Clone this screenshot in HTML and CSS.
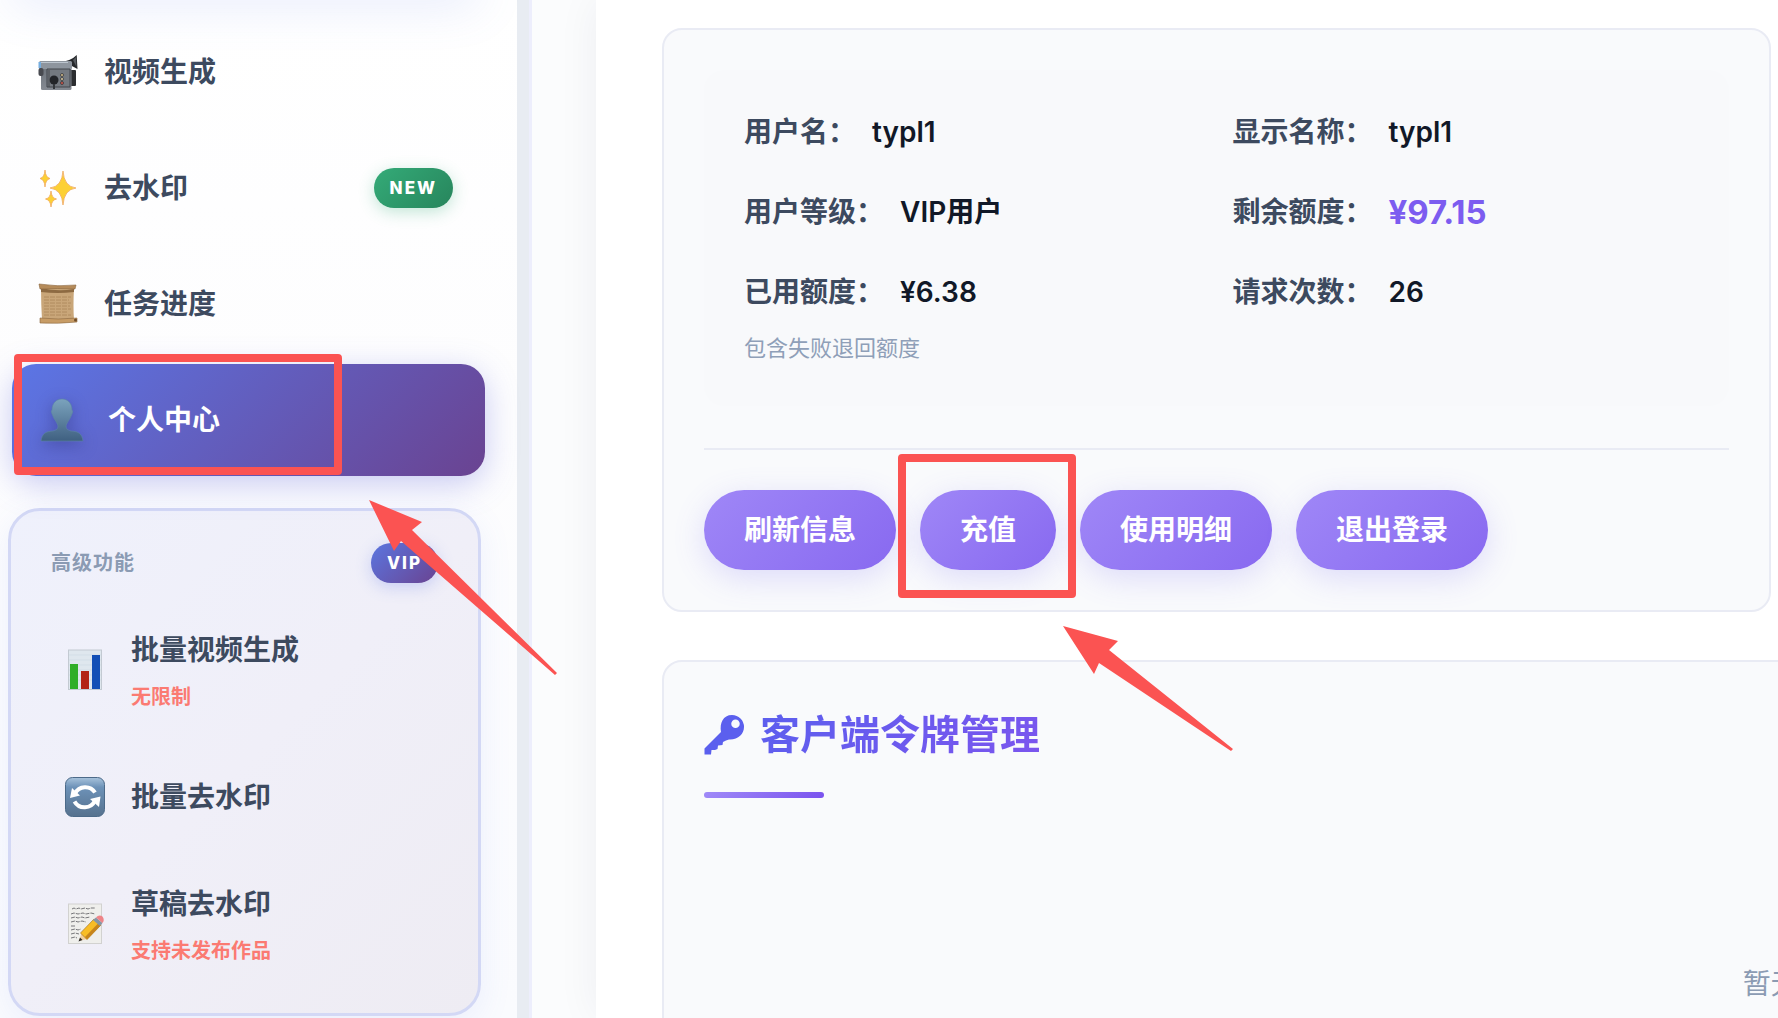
FILE: index.html
```html
<!DOCTYPE html>
<html lang="zh-CN">
<head>
	<meta charset="UTF-8">
	<title>个人中心</title>
	<link rel="stylesheet" href="styles.css">
</head>
<body>
	<div class="layout">
		<aside class="sidebar">
			<nav class="nav">
				<a href="#" class="nav-item">
					<svg class="nav-icon" viewBox="0 0 40 40">
						<defs>
							<linearGradient id="cam" x1="0" y1="0" x2="0" y2="1">
								<stop offset="0" stop-color="#a3a9b1"/>
								<stop offset="0.3" stop-color="#70767e"/>
								<stop offset="1" stop-color="#858a92"/>
							</linearGradient>
						</defs>
						<path d="M22 10 Q33 9 38.700 3 L39.500 17 L32 13Z" fill="#25272a"/>
						<path d="M35 8 L38 5 L38.500 15Z" fill="#55595e"/>
						<rect x="32" y="18" width="6" height="16" rx="1" fill="#2b2d30"/>
						<rect x="3" y="9.500" width="30.500" height="28.500" rx="1.500" fill="url(#cam)"/>
						<rect x="1" y="9" width="33" height="8" rx="1.500" fill="#8e959e"/>
						<path d="M1 10.500H30" stroke="#bcc5ce"/>
						<rect x="0.500" y="10" width="2.500" height="6" fill="#76aee0"/>
						<rect x="0.500" y="16" width="5" height="8" rx="2" fill="#484a50"/>
						<path d="M9 17H32V35H9Z" fill="#747980" stroke="#42464c"/>
						<circle cx="16" cy="28" r="4.500" fill="#232529"/>
						<path d="M16 32V37" stroke="#34373b" stroke-width="2"/>
						<path d="M11 18V35" stroke="#484c51"/>
						<circle cx="24" cy="23" r="1.500" fill="#d8c08c" stroke="#33363a" stroke-width="0.800"/>
						<circle cx="24" cy="27" r="1.500" fill="#e0cfa4" stroke="#33363a" stroke-width="0.800"/>
						<circle cx="24" cy="31" r="1.500" fill="#d4574a" stroke="#33363a" stroke-width="0.800"/>
					</svg>
					<span class="nav-text">视频生成</span>
				</a>
				<a href="#" class="nav-item">
					<svg class="nav-icon" viewBox="0 0 40 40">
						<g fill="#fcd034" stroke="#f0a860" stroke-width="0.800">
							<path d="M25 3 Q26 18.500 38 20 Q26 21.500 25 37 Q24 21.500 12 20 Q24 18.500 25 3Z"/>
							<path d="M7 2 Q7.500 9.500 12 10.500 Q7.500 11.500 7 19 Q6.500 11.500 2 10.500 Q6.500 9.500 7 2Z"/>
							<path d="M13 23 Q13.500 30 18.500 31 Q13.500 32 13 39 Q12.500 32 7.500 31 Q12.500 30 13 23Z"/>
						</g>
					</svg>
					<span class="nav-text">去水印</span>
					<span class="badge badge-new">NEW</span>
				</a>
				<a href="#" class="nav-item">
					<svg class="nav-icon" viewBox="0 0 40 40">
						<path d="M3 4H36Q35 22 36 36H4Q3 20 3 4Z" fill="#c9a679"/>
						<path d="M3 4Q20 8 36 5V8Q20 10 3 8Z" fill="#8d6a42"/>
						<path d="M6 13H33M6 16H31M6 19H33M6 22H32M6 25H33M6 28H30M6 31H33" stroke="#ab8759" stroke-width="0.800" stroke-dasharray="5 1"/>
						<path d="M1 0Q20 3 38 1L37 5Q20 4 2 5Z" fill="#b58b5a" stroke="#8a653c" stroke-width="0.600"/>
						<path d="M2 34Q20 36 39 34V38Q20 40 2 39Z" fill="#c79c66" stroke="#8a653c" stroke-width="0.600"/>
						<circle cx="37.500" cy="36" r="1.500" fill="#6f4c28"/>
					</svg>
					<span class="nav-text">任务进度</span>
				</a>
				<a href="#" class="nav-item active">
					<svg class="nav-icon" viewBox="0 0 40 40">
						<defs>
							<linearGradient id="man" x1="0" y1="0" x2="0" y2="1">
								<stop offset="0" stop-color="#7ba3bd"/>
								<stop offset="1" stop-color="#3f6081"/>
							</linearGradient>
						</defs>
						<path d="M20 -1C26.500 -1 30 4 30 10Q31.500 11 30 14C28 20 24 23 24 27Q24 30 29 31C37 31.500 40 34 41 41H-1C0 34 3 31.500 11 31Q16 30 16 27C16 23 12 20 10 14Q8.500 11 10 10C10 4 13.500 -1 20 -1Z" fill="url(#man)" stroke="#5d87a3" stroke-width="0.600"/>
					</svg>
					<span class="nav-text">个人中心</span>
				</a>
			</nav>
			<section class="vip-box">
				<div class="vip-head">
					<span class="vip-title">高级功能</span>
					<span class="badge badge-vip">VIP</span>
				</div>
				<nav class="nav">
					<a href="#" class="nav-item">
						<svg class="nav-icon" viewBox="0 0 40 40">
							<rect x="3.500" y="0" width="33" height="39.500" fill="#dfe7ee" stroke="#c3cad2"/>
							<path d="M4 5H36M4 10H36M4 15H36M4 20H36M4 25H36M4 30H36" stroke="#cfd9e2" stroke-width="0.600"/>
							<rect x="5" y="14" width="8" height="25" fill="#2fae27"/>
							<rect x="16" y="21" width="8" height="18" fill="#b32415"/>
							<rect x="27" y="5" width="8" height="34" fill="#134fb6"/>
						</svg>
						<span class="nav-text">批量视频生成<small class="nav-note">无限制</small></span>
					</a>
					<a href="#" class="nav-item">
						<svg class="nav-icon" viewBox="0 0 40 40">
							<defs>
								<linearGradient id="blue" x1="0" y1="0" x2="0" y2="1">
									<stop offset="0" stop-color="#a8c3dc"/>
									<stop offset="0.250" stop-color="#6d92b8"/>
									<stop offset="1" stop-color="#56718e"/>
								</linearGradient>
							</defs>
							<rect x="0.500" y="0.500" width="39" height="39" rx="7" fill="url(#blue)" stroke="#4c6a89"/>
							<path d="M10 16.500A11.500 11.500 0 0 1 30 15.500" fill="none" stroke="#fff" stroke-width="4"/>
							<path d="M7 11L5 21L15 18.500Z" fill="#fff"/>
							<path d="M30 23.500A11.500 11.500 0 0 1 9.500 24.500" fill="none" stroke="#fff" stroke-width="4"/>
							<path d="M25 22L35.500 19.500L34 30Z" fill="#fff"/>
						</svg>
						<span class="nav-text">批量去水印</span>
					</a>
					<a href="#" class="nav-item">
						<svg class="nav-icon" viewBox="0 0 40 40">
							<rect x="3.500" y="0" width="33" height="39.500" fill="#efefec" stroke="#d2d2d0"/>
							<path d="M7 5l2-1 2 1 3-1 2 1 4-1 3 1 3-1 4 0M6 10l3-1 4 1 5-1 3 1 5-1 4 1M6 14l4-1 3 1 4-1 3 1 5-1M6 18l4-1 3 1 4-1 4 1M6 22h5M6 26l4-1 3 1 3-1M6 30l4-1 4 1M6 34l4-1 2 1" fill="none" stroke="#77777a" stroke-dasharray="4 1"/>
							<path d="M14 37L16.500 29L22 35Z" fill="#f1cf9d"/>
							<path d="M13.500 37.500L15 33.500L17.500 36Z" fill="#2e2b28"/>
							<path d="M15.500 29L29 15L36 21L22 35.500Z" fill="#f8bd25" stroke="#9a6a1c" stroke-width="0.600"/>
							<path d="M20 33L34 18.500L36 21L22 35.500Z" fill="#c7851b"/>
							<path d="M28 16L31 13.500L37.500 19L35 22Z" fill="#8696a5"/>
							<path d="M31 13.500Q34 10 37.500 12.500Q40 16 37.500 19Z" fill="#ee8488"/>
						</svg>
						<span class="nav-text">草稿去水印<small class="nav-note">支持未发布作品</small></span>
					</a>
				</nav>
			</section>
		</aside>

		<main class="main">
			<section class="card">
				<div class="info">
					<div class="info-item"><span class="info-label">用户名：</span><span class="info-value">typl1</span></div>
					<div class="info-item"><span class="info-label">显示名称：</span><span class="info-value">typl1</span></div>
					<div class="info-item"><span class="info-label">用户等级：</span><span class="info-value">VIP用户</span></div>
					<div class="info-item"><span class="info-label">剩余额度：</span><span class="info-value money">¥97.15</span></div>
					<div class="info-item">
						<span class="info-label">已用额度：</span><span class="info-value">¥6.38</span>
						<p class="info-tip">包含失败退回额度</p>
					</div>
					<div class="info-item"><span class="info-label">请求次数：</span><span class="info-value">26</span></div>
				</div>
				<div class="actions">
					<button type="button" class="btn">刷新信息</button>
					<button type="button" class="btn">充值</button>
					<button type="button" class="btn">使用明细</button>
					<button type="button" class="btn">退出登录</button>
				</div>
			</section>

			<section class="card card-token">
				<h2 class="card-title">
					<svg class="key-icon" viewBox="0 0 40 40">
						<path fill-rule="evenodd" d="M28 0A12 12 0 0 1 40 12C40 19 34 25 25 24.500L22 25.500L19 27L18.500 30L14 30.500L13.500 34L11 35L7.500 35L7 39.500H0.500V33.500L17 17C15.500 8 19 0 28 0ZM31.500 4.500A4.200 4.200 0 1 0 31.500 13A4.200 4.200 0 1 0 31.500 4.500Z" fill="#5b5fee"/>
					</svg>
					<span class="card-title-text">客户端令牌管理</span>
				</h2>
				<p class="empty">暂无数据</p>
			</section>
		</main>
	</div>

	<!-- 红色标注 -->
	<svg class="marks" width="1778" height="1018">
		<g fill="none" stroke="#fb5352" stroke-width="8" stroke-linejoin="round">
			<rect x="18" y="358" width="320" height="113"/>
			<rect x="902" y="458" width="170" height="136"/>
		</g>
		<g fill="#fb5352">
			<path d="M369 500L422 522L412 530L557 673L555 675L401 541L394 551Z"/>
			<path d="M1063 626L1118 641L1109 650L1233 749L1231 751L1099 663L1094 674Z"/>
		</g>
	</svg>
</body>
</html>
```
FILE: styles.css
```css
* {
	margin: 0;
	padding: 0;
	box-sizing: border-box;
}
body {
	position: relative;
	height: 100vh;
	overflow: hidden;
	font-family: Inter, "Noto Sans CJK SC", sans-serif;
	font-size: 28px;
	line-height: 44px;
	color: #3d4a5f;
	background: #fbfcfd;
}
a {
	text-decoration: none;
	color: inherit;
}
.layout {
	display: flex;
	height: 100vh;
}

/* 侧边栏 */
.sidebar {
	position: relative;
	flex: none;
	width: 532px;
	padding: 16px 48px 0 8px;
	border-right: 3px solid #edeefc;
	background: linear-gradient(to right, transparent calc(100% - 12px), #e8ecf2 0), linear-gradient(#fff, #fdfdfe 40%, #fafbfe);
}
/* 上方区块的投影 */
.sidebar::before {
	content: "";
	position: absolute;
	top: -40px;
	left: 8px;
	right: 48px;
	height: 32px;
	border-radius: 24px;
	box-shadow: 0 12px 48px rgba(102, 126, 234, 0.18);
}
.nav {
	display: flex;
	flex-direction: column;
	gap: 4px;
}
.nav-item {
	display: flex;
	align-items: center;
	gap: 26px;
	min-height: 112px;
	padding: 25px 28px 25px 30px;
	border-radius: 24px;
	font-weight: 600;
}
.nav-icon {
	flex: none;
	width: 40px;
	height: 40px;
	overflow: visible;
}
.nav-note {
	display: block;
	margin-top: 10px;
	font-size: 20px;
	line-height: 30px;
	color: #fb7a72;
}
.nav-item.active {
	position: relative;
	left: 4px;
	color: #fff;
	background: linear-gradient(135deg, #5b76e6, #6a4391);
	box-shadow: 0 8px 32px rgba(102, 110, 220, 0.35);
}
.active .nav-icon {
	filter: drop-shadow(0 4px 8px rgba(40, 40, 110, 0.4));
}
.badge {
	margin-left: auto;
	padding: 0 16px;
	border-radius: 20px;
	font-size: 17px;
	font-weight: 800;
	line-height: 40px;
	letter-spacing: 2px;
	color: #fff;
}
.badge-new {
	background: linear-gradient(135deg, #34ab78, #27855c);
	box-shadow: 0 4px 16px rgba(52, 171, 120, 0.3);
}
.badge-vip {
	background: linear-gradient(135deg, #5b76e0, #6a4391);
	box-shadow: 0 4px 16px rgba(102, 126, 234, 0.3);
}
.vip-box {
	margin-top: 32px;
	padding: 32px 24px 22px;
	border: 3px solid #d3d8f5;
	border-radius: 32px;
	background: linear-gradient(135deg, #eff1fc, #f0eff8 50%, #eeecf3);
	box-shadow: 0 8px 32px rgba(102, 126, 234, 0.1);
}
.vip-head {
	display: flex;
	align-items: center;
	margin-bottom: 20px;
	padding: 0 16px;
}
.vip-title {
	font-size: 20px;
	font-weight: 600;
	line-height: 40px;
	letter-spacing: 1px;
	color: #8b9bb3;
}

/* 主内容 */
.main {
	flex: 1;
	min-width: 0;
	margin-left: 64px;
	padding: 28px 7px 0 66px;
	background: #fff;
	box-shadow: 0 0 40px rgba(30, 40, 70, 0.06);
}
.card {
	margin-bottom: 48px;
	padding: 40px;
	border: 2px solid #e9ebf4;
	border-radius: 20px;
	background: #f9fafc;
}
.info {
	display: grid;
	grid-template-columns: 1fr 1fr;
	gap: 36px 32px;
	margin-bottom: 42px;
	padding: 40px;
	border-radius: 20px;
	background: #f8f9fb;
}
.info-item {
	display: flex;
	flex-wrap: wrap;
	align-items: center;
	align-content: flex-start;
	column-gap: 16px;
	font-weight: 600;
}
.info-value {
	color: #111827;
}
.info-value.money {
	font-size: 33px;
	font-weight: 700;
	color: #7c5cf0;
}
.info-tip {
	width: 100%;
	margin-top: 16px;
	font-size: 22px;
	font-weight: 400;
	line-height: 36px;
	color: #8f9fb8;
}
.actions {
	display: flex;
	gap: 24px;
	padding-top: 40px;
	border-top: 2px solid #e9ebf4;
}
.btn {
	height: 80px;
	padding: 0 40px;
	border: 0;
	border-radius: 40px;
	font: inherit;
	font-weight: 600;
	color: #fff;
	background: linear-gradient(135deg, #9f87f7, #8869f0);
	box-shadow: 0 8px 32px rgba(110, 95, 240, 0.2);
	cursor: pointer;
}
/* 令牌列表较宽，超出部分不显示 */
.card-token {
	width: 205%;
	height: 600px;
}
.card-title {
	display: flex;
	align-items: center;
	flex-wrap: wrap;
	gap: 24px 16px;
	font-size: 40px;
	font-weight: 700;
	line-height: 66px;
}
.card-title::after {
	content: "";
	flex: none;
	width: 120px;
	height: 6px;
	margin-right: 80%;
	border-radius: 3px;
	background: linear-gradient(135deg, #a08af8, #7a52ee);
}
.key-icon {
	width: 40px;
	height: 40px;
}
.card-title-text {
	background: linear-gradient(135deg, #5b5fee, #7c55ee);
	-webkit-background-clip: text;
	background-clip: text;
	color: transparent;
}
.empty {
	padding-top: 164px;
	text-align: center;
	color: #8b9bb3;
}
.marks {
	position: absolute;
	top: 0;
	left: 0;
	pointer-events: none;
}
```
